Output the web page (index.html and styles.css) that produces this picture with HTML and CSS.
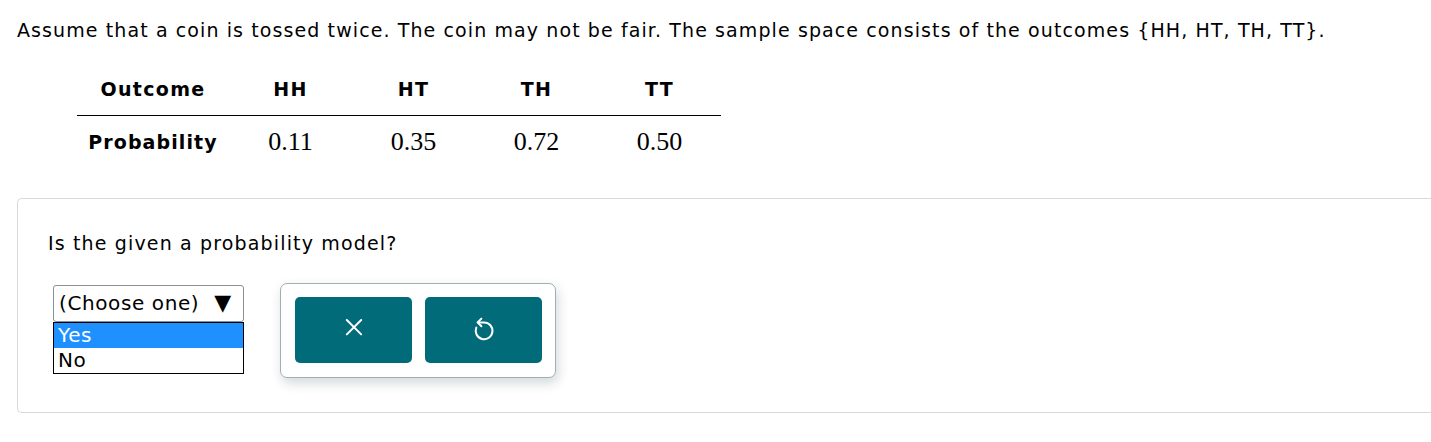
FILE: index.html
```html
<!DOCTYPE html>
<html>
<head>
<meta charset="utf-8">
<link rel="stylesheet" href="styles.css">
</head>
<body>
<p class="intro">Assume that a coin is tossed twice. The coin may not be fair. The sample space consists of the outcomes {HH, HT, TH, TT}.</p>
<table class="prob">
  <tr class="head">
    <th class="first">Outcome</th><th>HH</th><th>HT</th><th>TH</th><th>TT</th>
  </tr>
  <tr class="vals">
    <th class="first">Probability</th><td>0.11</td><td>0.35</td><td>0.72</td><td>0.50</td>
  </tr>
</table>
<div class="panel">
  <p class="question">Is the given a probability model?</p>
  <div class="answer">
    <div class="select-wrap">
      <div class="select">(Choose one) <span class="arrow">▼</span></div>
      <ul class="options">
        <li class="sel">Yes</li>
        <li>No</li>
      </ul>
    </div>
    <div class="btn-group">
      <button class="btn" aria-label="clear">
        <svg width="40" height="40" viewBox="0 0 40 40"><path d="M12.8 10 L27.2 24.4 M27.2 10 L12.8 24.4" stroke="#fff" stroke-width="2" fill="none" stroke-linecap="round"/></svg>
      </button>
      <button class="btn" aria-label="reset">
        <svg width="40" height="40" viewBox="0 0 40 40"><path d="M13.8 12.4 H20 A8.4 8.4 0 1 1 12.3 17.6" stroke="#fff" stroke-width="2" fill="none" stroke-linecap="round"/><path d="M17.4 8.6 L13.6 12.4 L17.4 16.2" stroke="#fff" stroke-width="2" fill="none" stroke-linecap="round" stroke-linejoin="round"/></svg>
      </button>
    </div>
  </div>
</div>
</body>
</html>
```
FILE: styles.css
```css
html, body { margin: 0; padding: 0; background: #fff; }
body {
  font-family: "DejaVu Sans", Verdana, sans-serif;
  color: #000;
  padding: 0 0 0 17px;
  overflow: hidden;
}
.intro {
  margin: 0;
  padding-top: 17px;
  font-size: 19px;
  line-height: 26px;
  letter-spacing: 1.1px;
  white-space: nowrap;
}
.prob {
  margin: 20px 0 0 60px;
  border-collapse: collapse;
}
.prob th, .prob td { padding: 0; text-align: center; width: 123px; }
.prob .first { width: 152px; }
.head th {
  font-size: 19px;
  letter-spacing: 1.3px;
  font-weight: bold;
  height: 52px;
  border-bottom: 1.5px solid #000;
}
.vals th { font-size: 19px; letter-spacing: 1.1px; font-weight: bold; height: 52px; }
.vals td {
  font-family: "Liberation Serif", "Times New Roman", serif;
  font-size: 26px;
  height: 52px;
}
.panel {
  margin-top: 30px;
  border: 1px solid #d5dbdb;
  border-right: none;
  border-radius: 5px 0 0 5px;
  height: 215px;
  box-sizing: border-box;
  padding: 30px 0 0 30px;
}
.question {
  margin: 0;
  font-size: 19px;
  line-height: 28px;
  letter-spacing: 1.15px;
}
.answer {
  display: flex;
  align-items: flex-start;
  gap: 36px;
  margin-top: 26px;
}
.select-wrap { position: relative; margin: 2px 0 0 5px; }
.select {
  width: 191px;
  height: 37px;
  box-sizing: border-box;
  border: 1px solid #8a8f93;
  border-radius: 3px;
  font-size: 20px;
  letter-spacing: 0.6px;
  line-height: 33px;
  padding-left: 5px;
  white-space: nowrap;
}
.arrow { font-size: 22px; margin-left: 8px; }
.options {
  position: absolute;
  left: 0;
  top: 37px;
  width: 191px;
  box-sizing: border-box;
  margin: 0;
  padding: 0;
  list-style: none;
  border: 1px solid #000;
  background: #fff;
  font-size: 20px;
  letter-spacing: 0.6px;
}
.options li { height: 25px; line-height: 25px; padding-left: 4px; }
.options li.sel { background: #1e90ff; color: #fff; }
.btn-group {
  display: flex;
  gap: 13px;
  padding: 13px 13px 14px 14px;
  border: 1px solid #9fb0b5;
  border-radius: 7px;
  box-shadow: 2px 5px 12px rgba(0, 40, 50, 0.18);
  background: #fff;
}
.btn {
  width: 117px;
  height: 66px;
  border: none;
  border-radius: 5px;
  background: #026b7a;
  display: flex;
  align-items: center;
  justify-content: center;
  padding: 0;
}
```
